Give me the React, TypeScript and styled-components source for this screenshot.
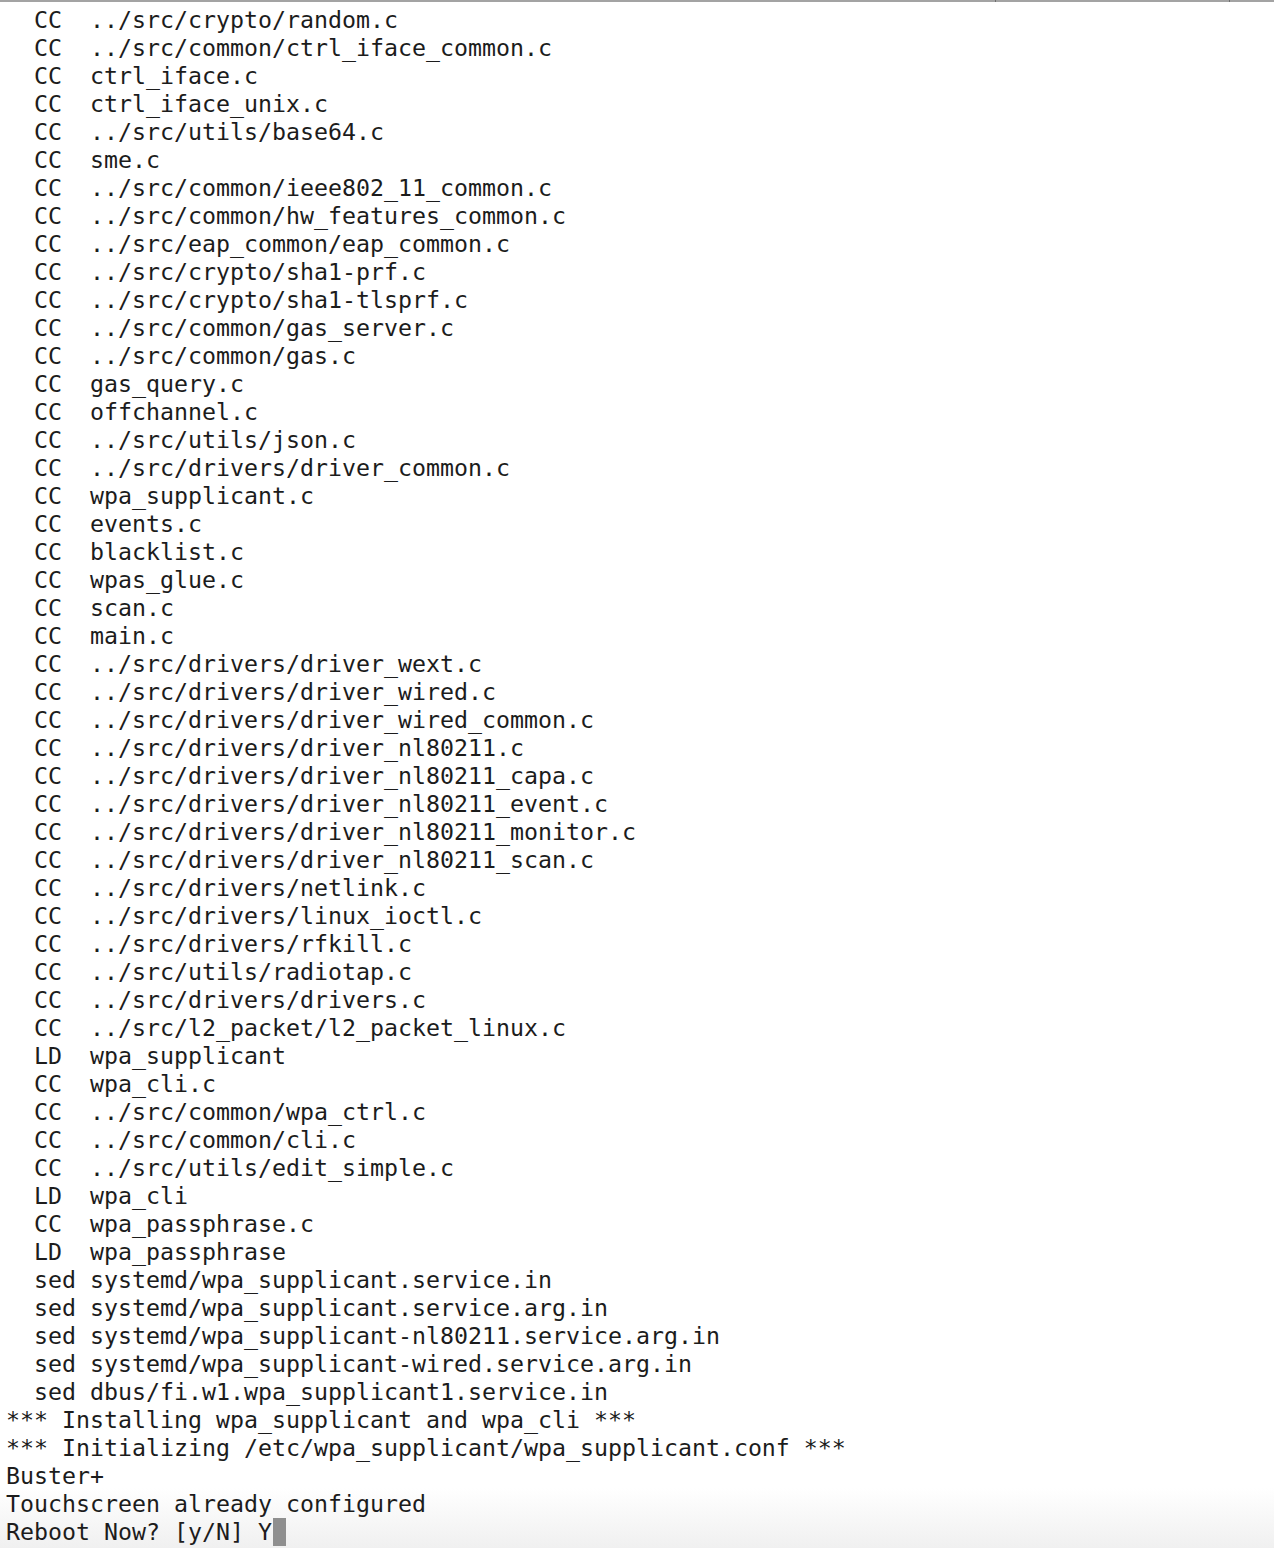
import React from "react";
import styled, { createGlobalStyle } from "styled-components";

const Global = createGlobalStyle`
  html, body { margin: 0; padding: 0; background: #ffffff; }
  #root { width: 1274px; }
`;

const Screen = styled.div`
  width: 1274px;
  height: 1548px;
  overflow: hidden;
  display: flex;
  flex-direction: column;
  background: linear-gradient(to bottom, #ffffff 0px, #ffffff 1488px, #f0f0f0 1548px);
`;

const TopEdge = styled.div`
  display: flex;
  height: 2px;
  flex: none;
`;

const EdgeSegment = styled.div<{ $w?: number }>`
  background: #a3a3a3;
  ${(p) => (p.$w ? `width: ${p.$w}px; flex: none;` : "flex: 1;")}
`;

const EdgeMark = styled.div`
  width: 1px;
  background: #6e6e6e;
  flex: none;
`;

const Output = styled.pre`
  margin: 0;
  padding: 4px 0 0 6px;
  font-family: "DejaVu Sans Mono", "Liberation Mono", monospace;
  font-size: 23.25px;
  line-height: 28px;
  color: #1c1c1c;
  letter-spacing: 0;
`;

const Line = styled.div`
  height: 28px;
  white-space: pre;
  display: flex;
  align-items: center;
`;

const Cursor = styled.span`
  display: inline-block;
  width: 13px;
  height: 28px;
  background: #8f8f8f;
  margin-left: 1px;
`;

const ccFiles = [
  "../src/crypto/random.c",
  "../src/common/ctrl_iface_common.c",
  "ctrl_iface.c",
  "ctrl_iface_unix.c",
  "../src/utils/base64.c",
  "sme.c",
  "../src/common/ieee802_11_common.c",
  "../src/common/hw_features_common.c",
  "../src/eap_common/eap_common.c",
  "../src/crypto/sha1-prf.c",
  "../src/crypto/sha1-tlsprf.c",
  "../src/common/gas_server.c",
  "../src/common/gas.c",
  "gas_query.c",
  "offchannel.c",
  "../src/utils/json.c",
  "../src/drivers/driver_common.c",
  "wpa_supplicant.c",
  "events.c",
  "blacklist.c",
  "wpas_glue.c",
  "scan.c",
  "main.c",
  "../src/drivers/driver_wext.c",
  "../src/drivers/driver_wired.c",
  "../src/drivers/driver_wired_common.c",
  "../src/drivers/driver_nl80211.c",
  "../src/drivers/driver_nl80211_capa.c",
  "../src/drivers/driver_nl80211_event.c",
  "../src/drivers/driver_nl80211_monitor.c",
  "../src/drivers/driver_nl80211_scan.c",
  "../src/drivers/netlink.c",
  "../src/drivers/linux_ioctl.c",
  "../src/drivers/rfkill.c",
  "../src/utils/radiotap.c",
  "../src/drivers/drivers.c",
  "../src/l2_packet/l2_packet_linux.c",
];

const lines: string[] = [
  ...ccFiles.map((f) => `  CC  ${f}`),
  "  LD  wpa_supplicant",
  "  CC  wpa_cli.c",
  "  CC  ../src/common/wpa_ctrl.c",
  "  CC  ../src/common/cli.c",
  "  CC  ../src/utils/edit_simple.c",
  "  LD  wpa_cli",
  "  CC  wpa_passphrase.c",
  "  LD  wpa_passphrase",
  "  sed systemd/wpa_supplicant.service.in",
  "  sed systemd/wpa_supplicant.service.arg.in",
  "  sed systemd/wpa_supplicant-nl80211.service.arg.in",
  "  sed systemd/wpa_supplicant-wired.service.arg.in",
  "  sed dbus/fi.w1.wpa_supplicant1.service.in",
  "*** Installing wpa_supplicant and wpa_cli ***",
  "*** Initializing /etc/wpa_supplicant/wpa_supplicant.conf ***",
  "Buster+",
  "Touchscreen already configured",
];

export default function App() {
  return (
    <>
      <Global />
      <Screen>
        <TopEdge>
          <EdgeSegment $w={995} />
          <EdgeMark />
          <EdgeSegment />
          <EdgeMark />
          <EdgeSegment $w={44} />
        </TopEdge>
        <Output>
          {lines.map((l, i) => (
            <Line key={i}>{l}</Line>
          ))}
          <Line>
            Reboot Now? [y/N] Y<Cursor />
          </Line>
        </Output>
      </Screen>
    </>
  );
}
